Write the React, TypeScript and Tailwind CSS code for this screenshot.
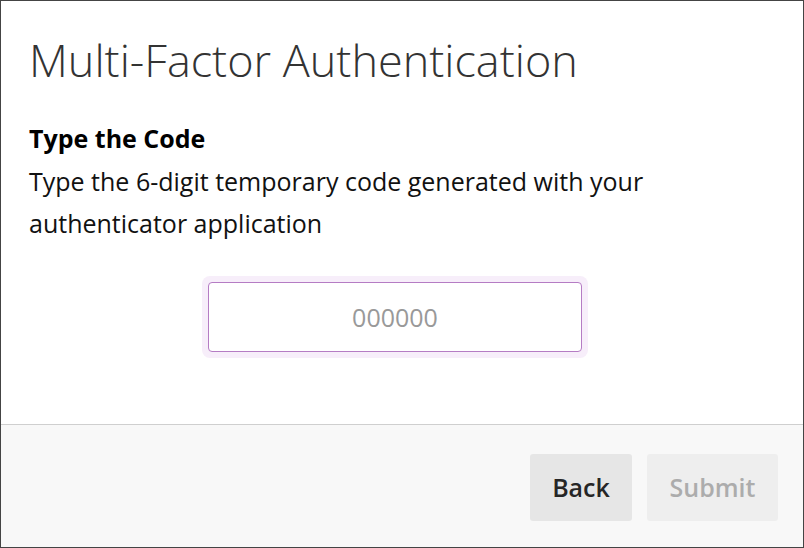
import React from "react";

export default function App() {
  return (
    <div
      className="w-[804px] h-[548px] border border-[#444] bg-white flex flex-col overflow-hidden"
      style={{ fontFamily: '"Open Sans", sans-serif' }}
    >
      <div className="flex-1 px-[28px] pt-[29px] border-b border-[#cfcfcf]">
        <h1 className="text-[45px] leading-[60px] font-light text-[#333]">Multi-Factor Authentication</h1>
        <h2 className="mt-[37px] text-[25px] leading-[22px] font-bold text-black">Type the Code</h2>
        <p className="mt-[11px] text-[25px] leading-[42px] text-[#111]">
          Type the 6-digit temporary code generated with your
          <br />
          authenticator application
        </p>
        <div className="flex mt-[32px] pl-[173px]">
          <div className="p-[6px] rounded-[8px] bg-[#f7eefa]">
            <input
              placeholder="000000"
              className="block w-[374px] h-[70px] rounded-[4px] border border-[#b57cc4] bg-white text-center text-[25px] placeholder:text-[#999] outline-none"
            />
          </div>
        </div>
      </div>
      <div className="h-[122px] bg-[#f8f8f8] flex justify-end items-start pt-[29px] pr-[25px] gap-[15px]">
        <button className="w-[102px] h-[67px] rounded-[3px] bg-[#e6e6e6] text-[25px] font-semibold text-[#262626]">Back</button>
        <button className="w-[131px] h-[67px] rounded-[3px] bg-[#eeeeee] text-[25px] font-semibold text-[#acacac]">Submit</button>
      </div>
    </div>
  );
}
